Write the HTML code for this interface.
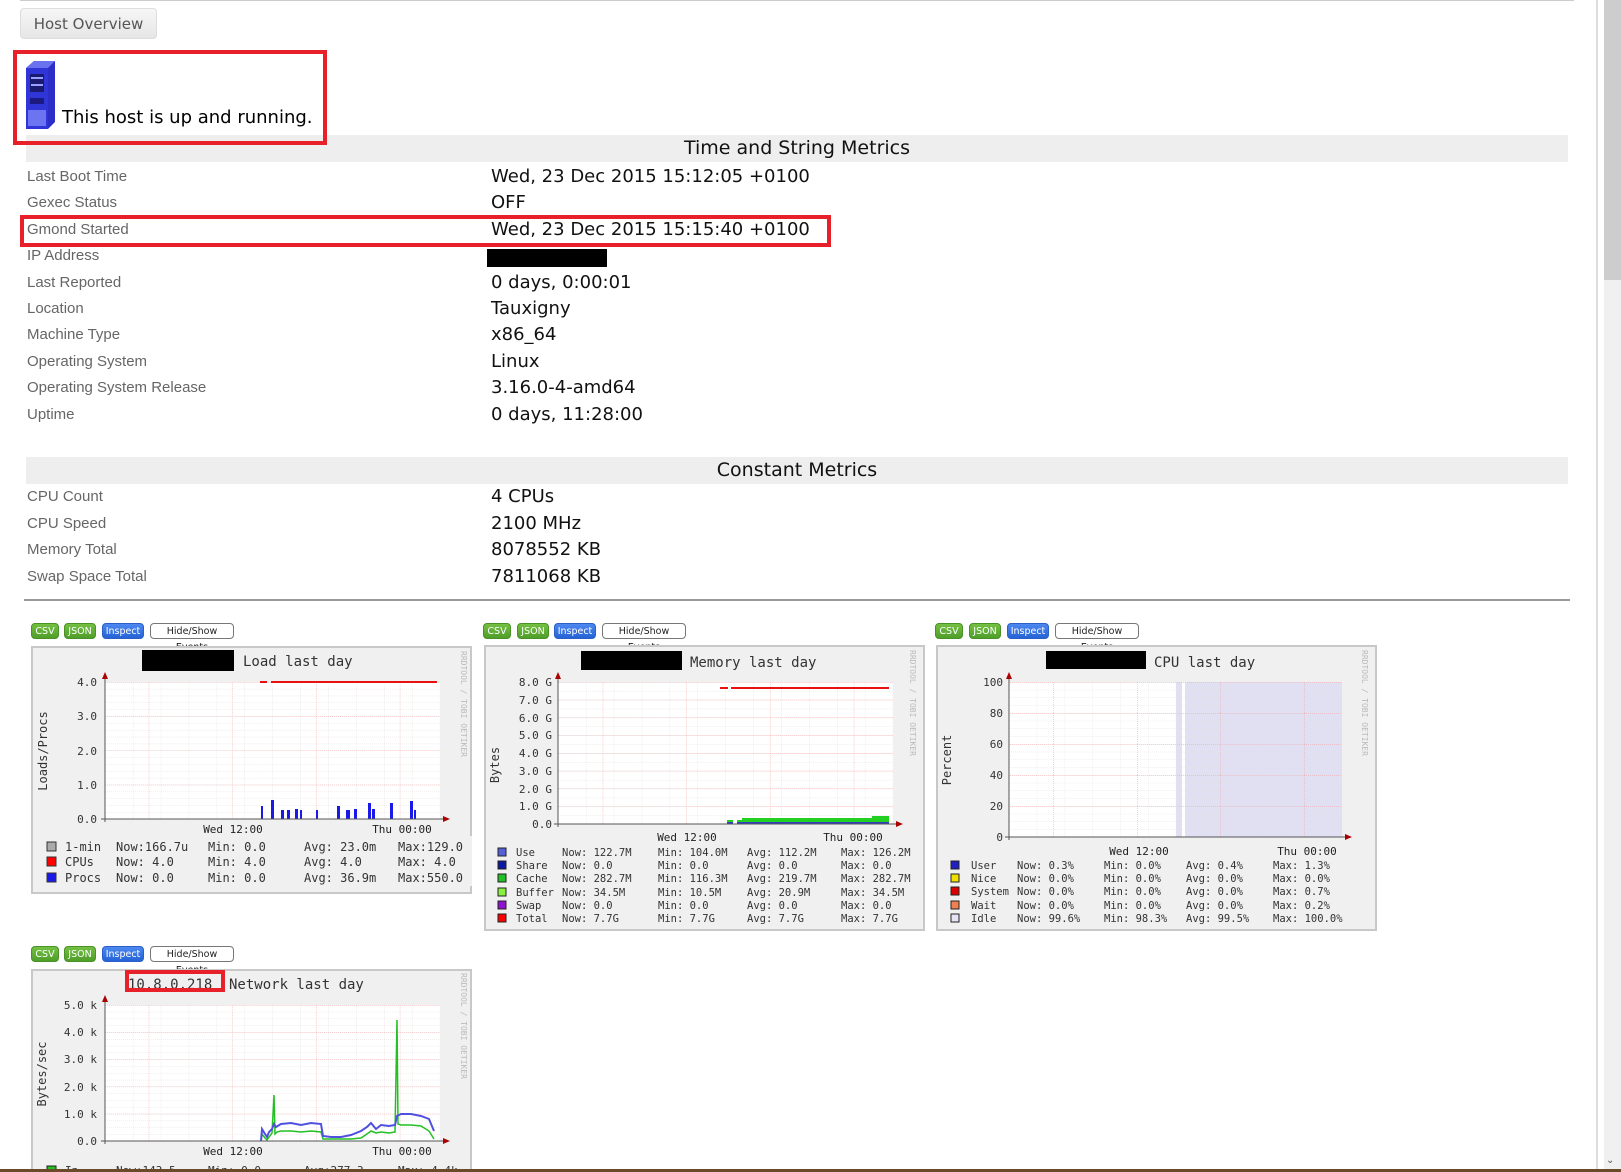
<!DOCTYPE html>
<html><head><meta charset="utf-8">
<style>
*{margin:0;padding:0;box-sizing:border-box}
html,body{width:1621px;height:1172px;overflow:hidden;background:#fff;position:relative;font-family:"Liberation Sans",sans-serif}
.a{position:absolute}
.lbl{position:absolute;left:27px;font-size:15px;color:#666;line-height:20px;white-space:nowrap}
.val{position:absolute;left:491px;font-family:"DejaVu Sans",sans-serif;font-size:18px;color:#111;line-height:22px;white-space:nowrap}
.band{position:absolute;left:26px;width:1542px;background:#eee;font-family:"DejaVu Sans",sans-serif;font-size:19px;color:#111;text-align:center}
.btn{position:absolute;height:16px;border-radius:4px;font-family:"DejaVu Sans",sans-serif;font-size:9.5px;line-height:16px;text-align:center;color:#fff}
.g{background:linear-gradient(#74c043,#4f9e2a);border:1px solid #4a9226}
.b{background:linear-gradient(#4d88f0,#2563d6);border:1px solid #2a5fc8}
.w{background:#fff;border:1px solid #777;color:#222}
svg text{font-family:"DejaVu Sans Mono",monospace}
</style></head><body>
<div class="a" style="left:20px;top:0;width:1554px;height:1px;background:#ccc"></div>
<div class="a" style="left:20px;top:8px;width:137px;height:31px;border:1px solid #ddd;border-radius:4px;background:linear-gradient(#f6f6f6,#e6e6e6);font-family:'DejaVu Sans',sans-serif;font-size:15px;color:#555;line-height:30px;text-align:center">Host Overview</div>

<div class="band" style="top:135px;height:27px;line-height:27px">Time and String Metrics</div>
<div class="a" style="left:13px;top:50px;width:314px;height:95px;border:4px solid #e8202a"></div>
<svg class="a" style="left:24px;top:60px" width="32" height="70" viewBox="0 0 32 70">
<polygon points="2,8 10,1 31,1 31,62 24,69 2,69" fill="#2b2fc8"/>
<polygon points="2,8 10,1 31,1 24,8" fill="#6a72f0"/>
<rect x="2" y="8" width="22" height="61" fill="#3035d8"/>
<rect x="6" y="14" width="14" height="18" fill="#1a1a70"/>
<rect x="7" y="17" width="12" height="2" fill="#9aa0ff"/>
<rect x="7" y="24" width="12" height="2" fill="#9aa0ff"/>
<rect x="6" y="38" width="14" height="6" fill="#1a1a80"/>
<rect x="4" y="50" width="18" height="16" fill="#6c74f2"/>
</svg>
<div class="a" style="left:62px;top:107px;font-family:'DejaVu Sans',sans-serif;font-size:18px;color:#000">This host is up and running.</div>

<div class="a" style="left:20px;top:215px;width:811px;height:32px;border:4px solid #e8202a"></div>
<div class="a" style="left:487px;top:249px;width:120px;height:18px;background:#000"></div>

<div class="lbl" style="top:167px">Last Boot Time</div><div class="val" style="top:166px">Wed, 23 Dec 2015 15:12:05 +0100</div>
<div class="lbl" style="top:193px">Gexec Status</div><div class="val" style="top:192px">OFF</div>
<div class="lbl" style="top:220px">Gmond Started</div><div class="val" style="top:219px">Wed, 23 Dec 2015 15:15:40 +0100</div>
<div class="lbl" style="top:246px">IP Address</div>
<div class="lbl" style="top:273px">Last Reported</div><div class="val" style="top:272px">0 days, 0:00:01</div>
<div class="lbl" style="top:299px">Location</div><div class="val" style="top:298px">Tauxigny</div>
<div class="lbl" style="top:325px">Machine Type</div><div class="val" style="top:324px">x86_64</div>
<div class="lbl" style="top:352px">Operating System</div><div class="val" style="top:351px">Linux</div>
<div class="lbl" style="top:378px">Operating System Release</div><div class="val" style="top:377px">3.16.0-4-amd64</div>
<div class="lbl" style="top:405px">Uptime</div><div class="val" style="top:404px">0 days, 11:28:00</div>

<div class="band" style="top:457px;height:27px;line-height:27px">Constant Metrics</div>
<div class="lbl" style="top:487px">CPU Count</div><div class="val" style="top:486px">4 CPUs</div>
<div class="lbl" style="top:514px">CPU Speed</div><div class="val" style="top:513px">2100 MHz</div>
<div class="lbl" style="top:540px">Memory Total</div><div class="val" style="top:539px">8078552 KB</div>
<div class="lbl" style="top:567px">Swap Space Total</div><div class="val" style="top:566px">7811068 KB</div>
<div class="a" style="left:24px;top:599px;width:1546px;height:2px;background:#999"></div>

<!-- buttons -->
<div class="btn g" style="left:31px;top:623px;width:28px">CSV</div><div class="btn g" style="left:64px;top:623px;width:32px">JSON</div><div class="btn b" style="left:102px;top:623px;width:42px">Inspect</div><div class="btn w" style="left:150px;top:623px;width:84px">Hide/Show Events</div>
<div class="btn g" style="left:483px;top:623px;width:28px">CSV</div><div class="btn g" style="left:517px;top:623px;width:32px">JSON</div><div class="btn b" style="left:554px;top:623px;width:42px">Inspect</div><div class="btn w" style="left:602px;top:623px;width:84px">Hide/Show Events</div>
<div class="btn g" style="left:935px;top:623px;width:28px">CSV</div><div class="btn g" style="left:969px;top:623px;width:32px">JSON</div><div class="btn b" style="left:1007px;top:623px;width:42px">Inspect</div><div class="btn w" style="left:1055px;top:623px;width:84px">Hide/Show Events</div>
<div class="btn g" style="left:31px;top:946px;width:28px">CSV</div><div class="btn g" style="left:64px;top:946px;width:32px">JSON</div><div class="btn b" style="left:102px;top:946px;width:42px">Inspect</div><div class="btn w" style="left:150px;top:946px;width:84px">Hide/Show Events</div>

<!-- Graph 1 Load -->
<svg class="a" style="left:31px;top:646px" width="441" height="248">
<defs>
<pattern id="mn1" x="74" y="36" width="27.9" height="6.85" patternUnits="userSpaceOnUse"><path d="M0 0V6.85M0 0H27.9" stroke="#e6dede" stroke-width="1" stroke-dasharray="1 1"/></pattern>
<pattern id="mj1" x="34" y="36" width="83.7" height="34.25" patternUnits="userSpaceOnUse"><path d="M0 0V34.25M0 0H83.7" stroke="#f3a0a0" stroke-width="1" stroke-dasharray="1 1"/></pattern>
</defs>
<rect x="1" y="1" width="439" height="246" fill="#f0f0f0" stroke="#c8c8c8" stroke-width="2"/>
<rect x="111" y="4" width="92" height="21" fill="#000"/>
<text x="212" y="20" font-size="14" fill="#333">Load last day</text>
<text transform="translate(16,105) rotate(-90)" text-anchor="middle" font-size="12" fill="#333">Loads/Procs</text>
<text transform="translate(430,5) rotate(90)" font-size="8" fill="#bbb">RRDTOOL / TOBI OETIKER</text>
<rect x="74" y="36" width="335" height="137" fill="#fff"/>
<rect x="74" y="36" width="335" height="137" fill="url(#mn1)"/>
<rect x="74" y="36" width="335" height="137" fill="url(#mj1)"/>
<g font-size="11" fill="#333" text-anchor="end"><text x="66" y="40">4.0</text><text x="66" y="74">3.0</text><text x="66" y="109">2.0</text><text x="66" y="143">1.0</text><text x="66" y="177">0.0</text></g>
<path d="M237 15V15" />
<path d="M237 15" />
<line x1="237" y1="15" x2="237" y2="15"/>
<line x1="230" y1="15" x2="230" y2="15"/>
<path d="M230 15" />
<line x1="237" y1="15" x2="405" y2="15" stroke="none"/>
<line x1="230" y1="15.5" x2="237" y2="15.5" stroke="none"/>
<line x1="229" y1="15" x2="229" y2="15"/>
<line x1="229" y1="15" x2="229" y2="15"/>
<line x1="229" y1="15" x2="229" y2="15"/>
<line x1="229" y1="15" x2="229" y2="15"/>
<line x1="229" y1="14" x2="229" y2="14"/>
<line x1="229" y1="15" x2="229" y2="15"/>
<line x1="229" y1="15" x2="229" y2="15"/>
<line x1="229" y1="36" x2="236" y2="36" stroke="#e81010" stroke-width="2"/>
<line x1="240" y1="36" x2="406" y2="36" stroke="#e81010" stroke-width="2"/>
<path d="M230 173V160h2V173M240 173V154h3V173M250 173V164h3V173M256 173V164h3V173M264 173V163h3V173M269 173V164h2V173M285 173V164h2V173M306 173V160h3V173M315 173V164h4V173M323 173V163h3V173M337 173V157h3V173M341 173V163h3V173M359 173V157h3V173M379 173V155h3V173M383 173V164h2V173" fill="#1a1ae8"/>
<line x1="74" y1="30" x2="74" y2="176" stroke="#555"/><polygon points="71,33 77,33 74,26" fill="#a00"/>
<line x1="70" y1="173" x2="414" y2="173" stroke="#555"/><polygon points="412,170 412,176 419,173" fill="#a00"/>
<g font-size="11" fill="#222" text-anchor="middle"><text x="202" y="187">Wed 12:00</text><text x="371" y="187">Thu 00:00</text></g>
<g font-size="12" fill="#333">
<rect x="16" y="196" width="9" height="9" fill="#aaa" stroke="#333"/><rect x="16" y="211" width="9" height="9" fill="#f00" stroke="#333"/><rect x="16" y="227" width="9" height="9" fill="#1a1ae8" stroke="#333"/>
<text x="34" y="205">1-min</text><text x="34" y="220">CPUs</text><text x="34" y="236">Procs</text>
<text x="85" y="205">Now:166.7u</text><text x="85" y="220">Now:   4.0</text><text x="85" y="236">Now:   0.0</text>
<text x="177" y="205">Min:  0.0</text><text x="177" y="220">Min:  4.0</text><text x="177" y="236">Min:  0.0</text>
<text x="273" y="205">Avg: 23.0m</text><text x="273" y="220">Avg:  4.0</text><text x="273" y="236">Avg: 36.9m</text>
<text x="367" y="205">Max:129.0</text><text x="367" y="220">Max:  4.0</text><text x="367" y="236">Max:550.0</text>
</g>
<rect x="438" y="190" width="3" height="50" fill="#f0f0f0"/>
</svg>

<!-- Graph 2 Memory -->
<svg class="a" style="left:484px;top:645px" width="441" height="286">
<defs>
<pattern id="mn2" x="74" y="37" width="27.9" height="8.9" patternUnits="userSpaceOnUse"><path d="M0 0V8.9M0 0H27.9" stroke="#e6dede" stroke-dasharray="1 1"/></pattern>
<pattern id="mj2" x="35" y="37" width="83.7" height="17.75" patternUnits="userSpaceOnUse"><path d="M0 0V17.75M0 0H83.7" stroke="#f3a0a0" stroke-dasharray="1 1"/></pattern>
</defs>
<rect x="1" y="1" width="439" height="284" fill="#f0f0f0" stroke="#c8c8c8" stroke-width="2"/>
<rect x="97" y="6" width="101" height="19" fill="#000"/>
<text x="206" y="22" font-size="14" fill="#333">Memory last day</text>
<text transform="translate(15,120) rotate(-90)" text-anchor="middle" font-size="12" fill="#333">Bytes</text>
<text transform="translate(426,5) rotate(90)" font-size="8" fill="#bbb">RRDTOOL / TOBI OETIKER</text>
<rect x="74" y="37" width="335" height="142" fill="#fff"/>
<rect x="74" y="37" width="335" height="142" fill="url(#mn2)"/>
<rect x="74" y="37" width="335" height="142" fill="url(#mj2)"/>
<g font-size="11" fill="#333" text-anchor="end"><text x="68" y="41">8.0 G</text><text x="68" y="59">7.0 G</text><text x="68" y="77">6.0 G</text><text x="68" y="94">5.0 G</text><text x="68" y="112">4.0 G</text><text x="68" y="130">3.0 G</text><text x="68" y="148">2.0 G</text><text x="68" y="165">1.0 G</text><text x="68" y="183">0.0</text></g>
<line x1="236" y1="43" x2="244" y2="43" stroke="#e81010" stroke-width="2"/><line x1="247" y1="43" x2="405" y2="43" stroke="#e81010" stroke-width="2"/>
<path d="M243 179V175h6v4zM253 179V175h5v-2h130v-2h17v8z" fill="#22d022"/>
<path d="M243 179v-2h6v2zM253 179v-2h152v2z" fill="#3040c0"/>
<line x1="74" y1="31" x2="74" y2="182" stroke="#555"/><polygon points="71,34 77,34 74,27" fill="#a00"/>
<line x1="70" y1="179" x2="414" y2="179" stroke="#555"/><polygon points="412,176 412,182 419,179" fill="#a00"/>
<g font-size="11" fill="#222" text-anchor="middle"><text x="203" y="196">Wed 12:00</text><text x="369" y="196">Thu 00:00</text></g>
<g font-size="10.5" fill="#333">
<rect x="14" y="203" width="8" height="8" fill="#5560d8" stroke="#222"/><rect x="14" y="216" width="8" height="8" fill="#0a1aa0" stroke="#222"/><rect x="14" y="229" width="8" height="8" fill="#22c022" stroke="#222"/><rect x="14" y="243" width="8" height="8" fill="#88f040" stroke="#222"/><rect x="14" y="256" width="8" height="8" fill="#9010d0" stroke="#222"/><rect x="14" y="269" width="8" height="8" fill="#f00" stroke="#222"/>
<text x="32" y="211">Use</text><text x="32" y="224">Share</text><text x="32" y="237">Cache</text><text x="32" y="251">Buffer</text><text x="32" y="264">Swap</text><text x="32" y="277">Total</text>
<text x="78" y="211">Now: 122.7M</text><text x="78" y="224">Now:   0.0</text><text x="78" y="237">Now: 282.7M</text><text x="78" y="251">Now:  34.5M</text><text x="78" y="264">Now:   0.0</text><text x="78" y="277">Now:   7.7G</text>
<text x="174" y="211">Min: 104.0M</text><text x="174" y="224">Min:   0.0</text><text x="174" y="237">Min: 116.3M</text><text x="174" y="251">Min:  10.5M</text><text x="174" y="264">Min:   0.0</text><text x="174" y="277">Min:   7.7G</text>
<text x="263" y="211">Avg: 112.2M</text><text x="263" y="224">Avg:   0.0</text><text x="263" y="237">Avg: 219.7M</text><text x="263" y="251">Avg:  20.9M</text><text x="263" y="264">Avg:   0.0</text><text x="263" y="277">Avg:   7.7G</text>
<text x="357" y="211">Max: 126.2M</text><text x="357" y="224">Max:   0.0</text><text x="357" y="237">Max: 282.7M</text><text x="357" y="251">Max:  34.5M</text><text x="357" y="264">Max:   0.0</text><text x="357" y="277">Max:   7.7G</text>
</g>
</svg>

<!-- Graph 3 CPU -->
<svg class="a" style="left:936px;top:645px" width="441" height="286">
<defs>
<pattern id="mn3" x="73" y="37" width="27.8" height="7.75" patternUnits="userSpaceOnUse"><path d="M0 0V7.75M0 0H27.8" stroke="#e6dede" stroke-dasharray="1 1"/></pattern>
<pattern id="mj3" x="34" y="37" width="83.5" height="31" patternUnits="userSpaceOnUse"><path d="M0 0V31M0 0H83.5" stroke="#f3a0a0" stroke-dasharray="1 1"/></pattern>
</defs>
<rect x="1" y="1" width="439" height="284" fill="#f0f0f0" stroke="#c8c8c8" stroke-width="2"/>
<rect x="110" y="6" width="100" height="18" fill="#000"/>
<text x="218" y="22" font-size="14" fill="#333">CPU last day</text>
<text transform="translate(15,115) rotate(-90)" text-anchor="middle" font-size="12" fill="#333">Percent</text>
<text transform="translate(426,5) rotate(90)" font-size="8" fill="#bbb">RRDTOOL / TOBI OETIKER</text>
<rect x="73" y="37" width="333" height="155" fill="#fff"/>
<rect x="240" y="37" width="6" height="155" fill="#e0e0f2"/><rect x="249" y="37" width="157" height="155" fill="#e0e0f2"/>
<rect x="73" y="37" width="333" height="155" fill="url(#mn3)"/>
<rect x="73" y="37" width="333" height="155" fill="url(#mj3)"/>
<g font-size="11" fill="#333" text-anchor="end"><text x="67" y="41">100</text><text x="67" y="72">80</text><text x="67" y="103">60</text><text x="67" y="134">40</text><text x="67" y="165">20</text><text x="67" y="196">0</text></g>
<line x1="73" y1="31" x2="73" y2="195" stroke="#555"/><polygon points="70,34 76,34 73,27" fill="#a00"/>
<line x1="69" y1="192" x2="411" y2="192" stroke="#555"/><polygon points="409,189 409,195 416,192" fill="#a00"/>
<g font-size="11" fill="#222" text-anchor="middle"><text x="203" y="210">Wed 12:00</text><text x="371" y="210">Thu 00:00</text></g>
<g font-size="10.5" fill="#333">
<rect x="15" y="216" width="8" height="8" fill="#2020c0" stroke="#222"/><rect x="15" y="229" width="8" height="8" fill="#f0e000" stroke="#222"/><rect x="15" y="242" width="8" height="8" fill="#d00" stroke="#222"/><rect x="15" y="256" width="8" height="8" fill="#f08050" stroke="#222"/><rect x="15" y="269" width="8" height="8" fill="#e4e4f4" stroke="#222"/>
<text x="35" y="224">User</text><text x="35" y="237">Nice</text><text x="35" y="250">System</text><text x="35" y="264">Wait</text><text x="35" y="277">Idle</text>
<text x="81" y="224">Now:   0.3%</text><text x="81" y="237">Now:   0.0%</text><text x="81" y="250">Now:   0.0%</text><text x="81" y="264">Now:   0.0%</text><text x="81" y="277">Now:  99.6%</text>
<text x="168" y="224">Min:   0.0%</text><text x="168" y="237">Min:   0.0%</text><text x="168" y="250">Min:   0.0%</text><text x="168" y="264">Min:   0.0%</text><text x="168" y="277">Min:  98.3%</text>
<text x="250" y="224">Avg:   0.4%</text><text x="250" y="237">Avg:   0.0%</text><text x="250" y="250">Avg:   0.0%</text><text x="250" y="264">Avg:   0.0%</text><text x="250" y="277">Avg:  99.5%</text>
<text x="337" y="224">Max:   1.3%</text><text x="337" y="237">Max:   0.0%</text><text x="337" y="250">Max:   0.7%</text><text x="337" y="264">Max:   0.2%</text><text x="337" y="277">Max: 100.0%</text>
</g>
</svg>

<!-- Graph 4 Network -->
<svg class="a" style="left:31px;top:969px" width="441" height="210">
<defs>
<pattern id="mn4" x="74" y="36" width="27.9" height="6.8" patternUnits="userSpaceOnUse"><path d="M0 0V6.8M0 0H27.9" stroke="#e6dede" stroke-dasharray="1 1"/></pattern>
<pattern id="mj4" x="34" y="36" width="83.7" height="27.2" patternUnits="userSpaceOnUse"><path d="M0 0V27.2M0 0H83.7" stroke="#f3a0a0" stroke-dasharray="1 1"/></pattern>
</defs>
<rect x="1" y="1" width="439" height="220" fill="#f0f0f0" stroke="#c8c8c8" stroke-width="2"/>
<text x="97" y="20" font-size="14" fill="#333">10.8.0.218</text>
<rect x="96" y="3" width="96" height="18" fill="none" stroke="#e8202a" stroke-width="4"/>
<text x="198" y="20" font-size="14" fill="#333">Network last day</text>
<text transform="translate(15,105) rotate(-90)" text-anchor="middle" font-size="12" fill="#333">Bytes/sec</text>
<text transform="translate(430,4) rotate(90)" font-size="8" fill="#bbb">RRDTOOL / TOBI OETIKER</text>
<rect x="74" y="36" width="335" height="136" fill="#fff"/>
<rect x="74" y="36" width="335" height="136" fill="url(#mn4)"/>
<rect x="74" y="36" width="335" height="136" fill="url(#mj4)"/>
<g font-size="11" fill="#333" text-anchor="end"><text x="66" y="40">5.0 k</text><text x="66" y="67">4.0 k</text><text x="66" y="94">3.0 k</text><text x="66" y="122">2.0 k</text><text x="66" y="149">1.0 k</text><text x="66" y="176">0.0</text></g>
<polyline points="230,172 231,165 234,169 236,171 238,168 241,164 243,126 244,165 246,163 250,162 260,162 270,163 280,162 290,163 292,170 300,170 310,170 320,170 330,169 336,165 340,162 345,164 350,163 358,164 364,163 366,51 367,155 370,156 380,156 390,157 398,162 403,170" fill="none" stroke="#22c022" stroke-width="1.5"/>
<polyline points="230,172 231,160 234,165 236,168 238,163 241,160 243,155 245,158 250,155 260,154 270,156 280,154 290,155 292,167 300,168 310,168 320,166 330,162 336,158 340,154 345,160 350,156 358,157 364,156 366,147 370,145 380,145 390,147 398,150 403,162" fill="none" stroke="#5050e0" stroke-width="2"/>
<line x1="74" y1="30" x2="74" y2="175" stroke="#555"/><polygon points="71,33 77,33 74,26" fill="#a00"/>
<line x1="70" y1="172" x2="414" y2="172" stroke="#555"/><polygon points="412,169 412,175 419,172" fill="#a00"/>
<g font-size="11" fill="#222" text-anchor="middle"><text x="202" y="186">Wed 12:00</text><text x="371" y="186">Thu 00:00</text></g>
<g font-size="11" fill="#333"><rect x="16" y="197" width="9" height="9" fill="#22c022" stroke="#222"/><text x="34" y="205">In</text><text x="85" y="205">Now:143.5</text><text x="177" y="205">Min:  0.0</text><text x="273" y="205">Avg:277.3</text><text x="367" y="205">Max:  4.4k</text></g>
</svg>

<!-- scrollbar and bottom -->
<div class="a" style="left:1596px;top:0;width:2px;height:1170px;background:#ddd"></div>
<div class="a" style="left:1604px;top:0;width:17px;height:1170px;background:#f0f0f0"></div>
<div class="a" style="left:1604px;top:0;width:17px;height:280px;background:#cdcdcd"></div>
<div class="a" style="left:1606px;top:1155px;font-size:10px;color:#555">&#8964;</div>
<div class="a" style="left:0;top:1169px;width:1621px;height:3px;background:#6b4a2a"></div>
</body></html>
